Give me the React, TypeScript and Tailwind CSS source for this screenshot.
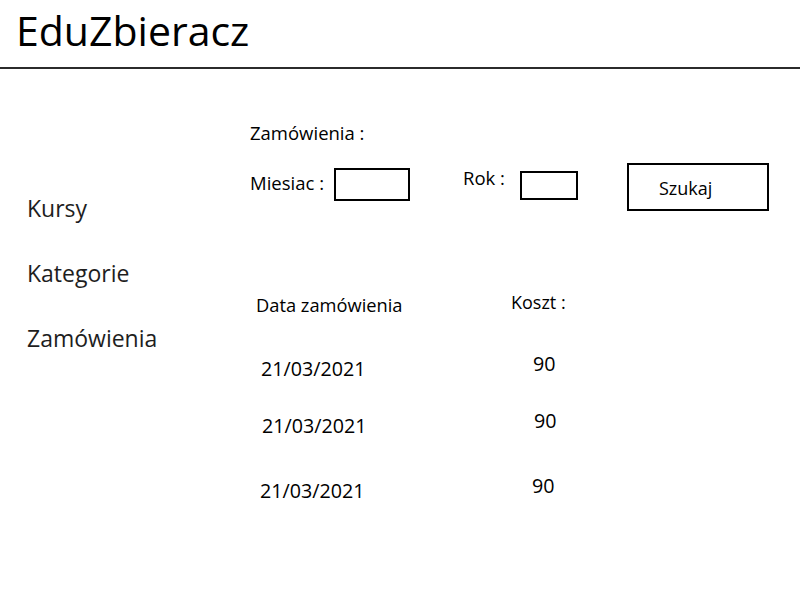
export default function App() {
  const orders = [
    { date: '21/03/2021', cost: '90', dx: 'ml-[11px]', mt: 'mt-[35px]' },
    { date: '21/03/2021', cost: '90', dx: 'ml-[12px]', mt: 'mt-[28px]' },
    { date: '21/03/2021', cost: '90', dx: 'ml-[10px]', mt: 'mt-[36px]' },
  ];

  return (
    <div className="w-[800px] h-[600px] bg-white text-black font-['Open_Sans',sans-serif]">
      <header className="h-[69px] border-b-2 border-[#2b2b2b] pl-4 pt-[5px]">
        <h1 className="text-[41px] leading-[50px]">EduZbieracz</h1>
      </header>

      <div className="flex">
        <nav className="w-[250px] pl-[27px] pt-[125px] flex flex-col gap-[37px] text-[23px] leading-[28px] text-[#1e1e1e]">
          <a>Kursy</a>
          <a>Kategorie</a>
          <a>Zamówienia</a>
        </nav>

        <main className="flex-1 pt-[52px]">
          <p className="text-[18.5px] leading-[24px]">Zamówienia :</p>

          <div className="flex items-start mt-[18px] text-[18.5px] leading-[24px]">
            <label className="mt-[8px]">Miesiac :</label>
            <div className="ml-[10px] mt-[5px] w-[76px] h-[33px] border-2 border-black" />
            <label className="ml-[53px] mt-[3px]">Rok :</label>
            <div className="ml-[15px] mt-[8px] w-[58px] h-[29px] border-2 border-black" />
            <button className="ml-[49px] w-[142px] h-[48px] border-2 border-black text-left pl-[30px] pt-[2px] text-[18px]">
              Szukaj
            </button>
          </div>

          <div className="flex items-start mt-[79px] text-[18.3px] leading-[24px]">
            <span className="ml-[6px] mt-[3px] w-[255px]">Data zamówienia</span>
            <span className="text-[18px]">Koszt :</span>
          </div>

          {orders.map((o, i) => (
            <div key={i} className={`flex items-start ${o.mt} text-[19.7px] leading-[24px]`}>
              <span className={`${o.dx} w-[272px] mt-[5px]`}>{o.date}</span>
              <span>{o.cost}</span>
            </div>
          ))}
        </main>
      </div>
    </div>
  );
}
